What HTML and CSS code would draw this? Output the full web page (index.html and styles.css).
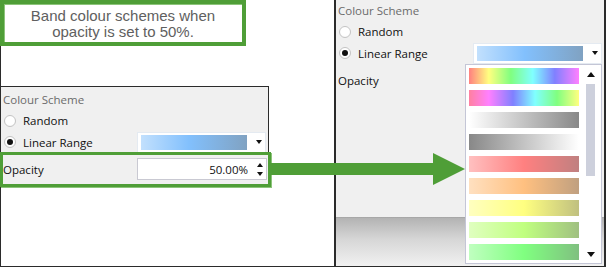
FILE: index.html
```html
<!DOCTYPE html>
<html lang="en">
<head>
    <meta charset="UTF-8">
    <title>Band colour schemes</title>
    <link rel="stylesheet" href="styles.css">
</head>
<body>
    <div class="frame">
        <!-- Left: the note and the cropped settings panel -->
        <div class="pane pane-left">
            <div class="callout">Band colour schemes when<br>opacity is set to 50%.</div>

            <div class="panel panel-clip">
                <div class="panel-title">Colour Scheme</div>
                <div class="option"><span class="radio"></span>Random</div>
                <div class="option option-range">
                    <span class="radio checked"></span>Linear Range
                    <div class="combo"><span class="swatch sw-blue"></span><span class="caret"></span></div>
                </div>
            </div>

            <div class="highlight">
                <span>Opacity</span>
                <div class="spin">
                    <span class="spin-value">50.00%</span>
                    <span class="spin-arrows"><i class="tri-up"></i><i class="tri-down"></i></span>
                </div>
            </div>
        </div>

        <!-- Right: the panel with the scheme list opened -->
        <div class="pane pane-right">
            <div class="panel panel-full">
                <div class="panel-title">Colour Scheme</div>
                <div class="option"><span class="radio"></span>Random</div>
                <div class="option option-range">
                    <span class="radio checked"></span>Linear Range
                    <div class="combo"><span class="swatch sw-blue"></span><span class="caret"></span></div>
                </div>
                <div class="option option-opacity">Opacity</div>
            </div>
            <div class="shade"></div>

            <div class="popup">
                <div class="popup-list">
                    <span class="swatch sw-rainbow"></span>
                    <span class="swatch sw-rainbow-rev"></span>
                    <span class="swatch sw-white-grey"></span>
                    <span class="swatch sw-grey-white"></span>
                    <span class="swatch sw-red"></span>
                    <span class="swatch sw-orange"></span>
                    <span class="swatch sw-yellow"></span>
                    <span class="swatch sw-lime"></span>
                    <span class="swatch sw-green"></span>
                </div>
                <div class="scrollbar">
                    <i class="tri-up"></i>
                    <div class="thumb"></div>
                    <i class="tri-down"></i>
                </div>
            </div>
        </div>

        <svg class="arrow" width="195" height="33" viewBox="0 0 195 33">
            <polygon points="0,10 162,10 162,0 194,16 162,32 162,22 0,22" fill="#4f9e37"/>
        </svg>
    </div>
</body>
</html>
```

FILE: styles.css
```css
/* Global */
body {
    margin: 0;
    background: #fff;
    font-family: 'Open Sans', 'Noto Sans', sans-serif;
    font-size: 11.5px;
    color: #111;
}

.frame {
    position: relative;
    width: 606px;
    height: 267px;
    display: flex;
    box-sizing: border-box;
    border-bottom: 1px solid #2b2b2b;
    overflow: hidden;
}

.pane {
    box-sizing: border-box;
}

.pane-left {
    width: 336px;
    border-left: 1px solid #2b2b2b;
    border-right: 2px solid #2b2b2b;
}

.pane-right {
    position: relative;
    flex: 1;
    display: flex;
    flex-direction: column;
    border-right: 2px solid #2b2b2b;
}

/* Note box */
.callout {
    margin-left: -1px;
    width: 246px;
    height: 46px;
    box-sizing: border-box;
    border: 4px solid #4f9e37;
    box-shadow: inset 1px 1px 0 #8cc47a;
    background: #fff;
    font-family: 'Liberation Sans', Arial, sans-serif;
    font-size: 15px;
    line-height: 16px;
    color: #606060;
    text-align: center;
    padding-top: 4px;
}

/* Settings panel */
.panel {
    background: #f0f0f0;
    padding: 0 2px;
    box-sizing: border-box;
}

.panel-clip {
    margin-top: 40px;
    width: 268px;
    height: 66px;
    border-top: 1px solid #2b2b2b;
    border-right: 1px solid #2b2b2b;
    padding-top: 3px;
}

.panel-full {
    flex: 1;
    padding-top: 1px;
}

.panel-title {
    height: 20px;
    line-height: 20px;
    color: #6b6b6b;
}

.option {
    display: flex;
    align-items: center;
    height: 21px;
}

.option-range {
    height: 22px;
}

.option-opacity {
    height: 32px;
}

.radio {
    width: 12px;
    height: 12px;
    margin: 0 7px 0 1px;
    border: 1px solid #c4c4c4;
    border-radius: 50%;
    background: radial-gradient(circle at 50% 40%, #fff 55%, #f2f2f2);
    box-sizing: border-box;
    display: flex;
    align-items: center;
    justify-content: center;
}

.radio.checked::after {
    content: "";
    width: 6px;
    height: 6px;
    border-radius: 50%;
    background: #111;
}

.combo {
    margin-left: auto;
    width: 129px;
    height: 21px;
    box-sizing: border-box;
    border: 1px solid #e4eaf1;
    background: #fff;
    display: flex;
    align-items: center;
    padding-left: 3px;
}

.combo .swatch {
    width: 106px;
    height: 15px;
    margin: 0;
}

.caret {
    margin-left: 9px;
    width: 0;
    height: 0;
    border-left: 3px solid transparent;
    border-right: 3px solid transparent;
    border-top: 4px solid #111;
}

/* Highlighted opacity row */
.highlight {
    position: relative;
    margin-left: -1px;
    width: 271px;
    height: 35px;
    box-sizing: border-box;
    border: 3px solid #4f9e37;
    box-shadow: 1px 1px 0 #8cc47a;
    background: #f0f0f0;
    display: flex;
    align-items: center;
    padding: 0 1px 1px 0;
}

.spin {
    margin-left: auto;
    width: 130px;
    height: 22px;
    box-sizing: border-box;
    border: 1px solid #c9c9d2;
    background: #fff;
    display: flex;
    align-items: center;
    justify-content: flex-end;
}

.spin-value {
    margin-right: 5px;
}

.spin-arrows {
    width: 13px;
    display: flex;
    flex-direction: column;
    align-items: center;
    gap: 5px;
}

.tri-up,
.tri-down {
    display: block;
    width: 0;
    height: 0;
    border-left: 3px solid transparent;
    border-right: 3px solid transparent;
}

.tri-up {
    border-bottom: 4px solid #111;
}

.tri-down {
    border-top: 4px solid #111;
}

/* Bottom shading of the window */
.shade {
    height: 49px;
    background: linear-gradient(#9c9c9c 0, #b3b3b3 1px, #d6d6d6 45%, #f1f1f1 100%);
}

/* Open scheme list */
.popup {
    position: absolute;
    left: 129px;
    top: 64px;
    width: 137px;
    height: 200px;
    box-sizing: border-box;
    border: 1px solid #c4c6d6;
    background: #fff;
    display: flex;
    padding: 3px 0 0 3px;
}

.popup-list {
    width: 110px;
    display: flex;
    flex-direction: column;
    gap: 6px;
}

.swatch {
    display: block;
    width: 110px;
    height: 16px;
}

.scrollbar {
    width: 9px;
    margin: 2px 0 3px 7px;
    display: flex;
    flex-direction: column;
    align-items: center;
}

.scrollbar .tri-up {
    margin-top: 2px;
    border-left-width: 4px;
    border-right-width: 4px;
    border-bottom-width: 5px;
}

.scrollbar .tri-down {
    margin-top: auto;
    margin-bottom: 3px;
    border-left-width: 4px;
    border-right-width: 4px;
    border-top-width: 5px;
}

.thumb {
    width: 9px;
    height: 92px;
    margin-top: 7px;
    background: #cdd0dc;
}

/* Band colour schemes at 50% opacity */
.sw-blue { background: linear-gradient(90deg, #c2e0fd, #82c0fd 45%, #80a2c2); }
.sw-rainbow { background: linear-gradient(90deg, #ff8080, #ffff80 18%, #80ff80 38%, #80ffff 58%, #8080ff 78%, #ff80ff); }
.sw-rainbow-rev { background: linear-gradient(90deg, #ff80a0, #ff80ff 18%, #8080ff 40%, #80ffff 60%, #80ff80 80%, #ffff80); }
.sw-white-grey { background: linear-gradient(90deg, #ffffff, #888888); }
.sw-grey-white { background: linear-gradient(90deg, #888888, #ffffff); }
.sw-red { background: linear-gradient(90deg, #ffc0c0, #ff8080 50%, #c08080); }
.sw-orange { background: linear-gradient(90deg, #ffe0c0, #ffc080 50%, #c0a080); }
.sw-yellow { background: linear-gradient(90deg, #ffffc0, #ffff80 50%, #c0c080); }
.sw-lime { background: linear-gradient(90deg, #e0ffc0, #c0ff80 50%, #a0c080); }
.sw-green { background: linear-gradient(90deg, #c0ffc0, #80ff80 50%, #80c080); }

/* Pointer from the note to the list */
.arrow {
    position: absolute;
    left: 271px;
    top: 153px;
}
```
